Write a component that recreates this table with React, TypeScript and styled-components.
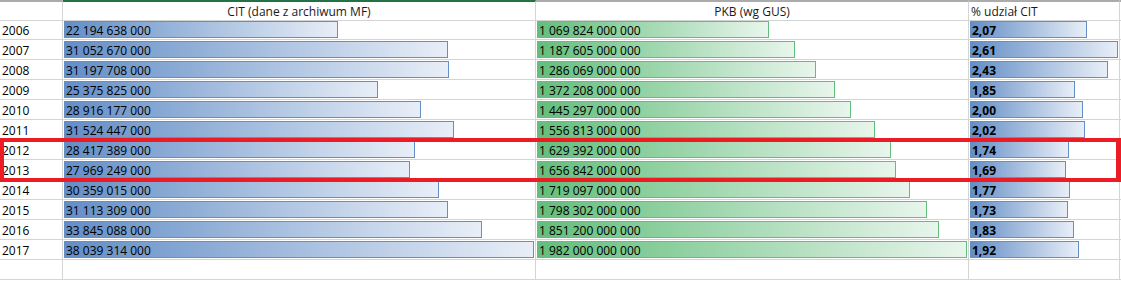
import React from 'react'
import styled, { createGlobalStyle } from 'styled-components'

const GlobalStyle = createGlobalStyle`
  html, body {
    margin: 0;
    padding: 0;
    background: #ffffff;
  }
  body {
    font-family: 'Open Sans', 'Liberation Sans', sans-serif;
    font-size: 12px;
    color: #000000;
  }
`

type Row = {
  year: number
  cit: number
  pkb: number
  share: number
}

const rows: Row[] = [
  { year: 2006, cit: 22194638000, pkb: 1069824000000, share: 2.07 },
  { year: 2007, cit: 31052670000, pkb: 1187605000000, share: 2.61 },
  { year: 2008, cit: 31197708000, pkb: 1286069000000, share: 2.43 },
  { year: 2009, cit: 25375825000, pkb: 1372208000000, share: 1.85 },
  { year: 2010, cit: 28916177000, pkb: 1445297000000, share: 2.0 },
  { year: 2011, cit: 31524447000, pkb: 1556813000000, share: 2.02 },
  { year: 2012, cit: 28417389000, pkb: 1629392000000, share: 1.74 },
  { year: 2013, cit: 27969249000, pkb: 1656842000000, share: 1.69 },
  { year: 2014, cit: 30359015000, pkb: 1719097000000, share: 1.77 },
  { year: 2015, cit: 31113309000, pkb: 1798302000000, share: 1.73 },
  { year: 2016, cit: 33845088000, pkb: 1851200000000, share: 1.83 },
  { year: 2017, cit: 38039314000, pkb: 1982000000000, share: 1.92 },
]

const maxCit = Math.max(...rows.map((r) => r.cit))
const maxPkb = Math.max(...rows.map((r) => r.pkb))
const maxShare = Math.max(...rows.map((r) => r.share))

const formatInt = (n: number) => String(n).replace(/\B(?=(\d{3})+(?!\d))/g, ' ')
const formatShare = (n: number) => n.toFixed(2).replace('.', ',')

const palette = {
  blue: { solid: '#638ec6', light: '#e8eef7' },
  green: { solid: '#63be7b', light: '#e8f5ec' },
}

export default function App() {
  return (
    <>
      <GlobalStyle />
      <Sheet>
        <Grid>
          <HeaderCell />
          <HeaderCell $selected $align="center">
            CIT (dane z archiwum MF)
          </HeaderCell>
          <HeaderCell $align="center">PKB (wg GUS)</HeaderCell>
          <HeaderCell>% udział CIT</HeaderCell>
          <HeaderCell $last />

          {rows.map((r) => (
            <React.Fragment key={r.year}>
              <Cell>
                <Plain>{r.year}</Plain>
              </Cell>
              <Cell>
                <DataBar $tone="blue" style={{ width: `${(r.cit / maxCit) * 470}px` }}>
                  {formatInt(r.cit)}
                </DataBar>
              </Cell>
              <Cell>
                <DataBar $tone="green" style={{ width: `${(r.pkb / maxPkb) * 430}px` }}>
                  {formatInt(r.pkb)}
                </DataBar>
              </Cell>
              <Cell>
                <DataBar $tone="blue" $bold style={{ width: `${(r.share / maxShare) * 148}px` }}>
                  {formatShare(r.share)}
                </DataBar>
              </Cell>
              <Cell $last />
            </React.Fragment>
          ))}

          <Cell />
          <Cell />
          <Cell />
          <Cell />
          <Cell $last />
        </Grid>
        <Highlight />
      </Sheet>
    </>
  )
}

const Sheet = styled.div`
  position: relative;
  width: 1121px;
  height: 281px;
  overflow: hidden;
`

const Grid = styled.div`
  display: grid;
  grid-template-columns: 63px 473px 433px 151px 1fr;
  grid-auto-rows: 20px;
`

const HeaderCell = styled.div<{ $selected?: boolean; $align?: 'center' | 'left'; $last?: boolean }>`
  box-sizing: border-box;
  height: 21px;
  margin-bottom: 0;
  display: flex;
  align-items: center;
  justify-content: ${({ $align }) => ($align === 'center' ? 'center' : 'flex-start')};
  padding: 1px 2px 0;
  border-top: 2px solid ${({ $selected }) => ($selected ? '#217346' : '#ababab')};
  border-bottom: 1px solid #d4d4d4;
  border-right: ${({ $last }) => ($last ? 'none' : '1px solid #d4d4d4')};
  white-space: nowrap;
  color: #1a1a1a;
`

const Cell = styled.div<{ $last?: boolean }>`
  box-sizing: border-box;
  height: 20px;
  display: flex;
  align-items: flex-start;
  padding: 1px 1px 0;
  border-bottom: 1px solid #d4d4d4;
  border-right: ${({ $last }) => ($last ? 'none' : '1px solid #d4d4d4')};
  white-space: nowrap;
`

const Plain = styled.div`
  padding: 1px 1px 0;
  line-height: 17px;
`

const DataBar = styled.div<{ $tone: 'blue' | 'green'; $bold?: boolean }>`
  box-sizing: border-box;
  height: 17px;
  line-height: 16px;
  padding: 1px 0 0 1px;
  font-weight: ${({ $bold }) => ($bold ? 700 : 400)};
  border: 1px solid ${({ $tone }) => palette[$tone].solid};
  background: linear-gradient(
    90deg,
    ${({ $tone }) => palette[$tone].solid} 0%,
    ${({ $tone }) => palette[$tone].light} 100%
  );
  overflow: visible;
  white-space: nowrap;
`

const Highlight = styled.div`
  position: absolute;
  left: 0;
  top: 138px;
  width: 1121px;
  height: 44px;
  box-sizing: border-box;
  border: 4px solid #ed1c24;
  border-right-width: 5px;
  pointer-events: none;
`
